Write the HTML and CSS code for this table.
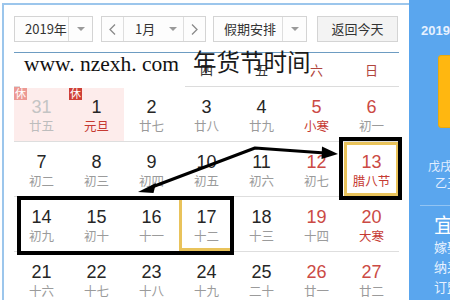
FILE: index.html
```html
<!DOCTYPE html>
<html lang="zh">
<head>
<meta charset="utf-8">
<title>万年历</title>
<link rel="stylesheet" href="styles.css">
</head>
<body>
<div class="page">
  <div class="cal">
    <div class="toolbar">
      <div class="sel sel-year">
        <span class="sel-text">2019年</span>
        <span class="sel-arrow"><i class="tri"></i></span>
      </div>
      <div class="sel sel-month">
        <span class="nav"><svg width="7" height="11" viewBox="0 0 7 11"><polyline points="6,0.5 1,5.5 6,10.5" fill="none" stroke="#8a8a8a" stroke-width="1.3"/></svg></span>
        <span class="sel-mid"><span class="mid-text">1月</span><i class="tri"></i></span>
        <span class="nav nav-r"><svg width="7" height="11" viewBox="0 0 7 11"><polyline points="1,0.5 6,5.5 1,10.5" fill="none" stroke="#8a8a8a" stroke-width="1.3"/></svg></span>
      </div>
      <div class="sel sel-hol">
        <span class="sel-text">假期安排</span>
        <span class="sel-arrow"><i class="tri"></i></span>
      </div>
      <div class="btn-today">返回今天</div>
    </div>

    <div class="week">
      <span>一</span><span>二</span><span>三</span><span>四</span><span>五</span><span class="we">六</span><span class="we">日</span>
    </div>

    <div class="grid">
      <div class="cell rest-day other"><i class="badge faded">休</i><div class="num">31</div><div class="lun">廿五</div></div>
      <div class="cell rest-day"><i class="badge">休</i><div class="num">1</div><div class="lun red">元旦</div></div>
      <div class="cell"><div class="num">2</div><div class="lun">廿七</div></div>
      <div class="cell"><div class="num">3</div><div class="lun">廿八</div></div>
      <div class="cell"><div class="num">4</div><div class="lun">廿九</div></div>
      <div class="cell wkend"><div class="num">5</div><div class="lun red">小寒</div></div>
      <div class="cell wkend"><div class="num">6</div><div class="lun">初一</div></div>

      <div class="cell"><div class="num">7</div><div class="lun">初二</div></div>
      <div class="cell"><div class="num">8</div><div class="lun">初三</div></div>
      <div class="cell"><div class="num">9</div><div class="lun">初四</div></div>
      <div class="cell"><div class="num">10</div><div class="lun">初五</div></div>
      <div class="cell"><div class="num">11</div><div class="lun">初六</div></div>
      <div class="cell wkend"><div class="num">12</div><div class="lun">初七</div></div>
      <div class="cell wkend mark"><div class="num">13</div><div class="lun red">腊八节</div></div>

      <div class="cell"><div class="num">14</div><div class="lun">初九</div></div>
      <div class="cell"><div class="num">15</div><div class="lun">初十</div></div>
      <div class="cell"><div class="num">16</div><div class="lun">十一</div></div>
      <div class="cell mark"><div class="num">17</div><div class="lun">十二</div></div>
      <div class="cell"><div class="num">18</div><div class="lun">十三</div></div>
      <div class="cell wkend"><div class="num">19</div><div class="lun">十四</div></div>
      <div class="cell wkend"><div class="num">20</div><div class="lun red">大寒</div></div>

      <div class="cell"><div class="num">21</div><div class="lun">十六</div></div>
      <div class="cell"><div class="num">22</div><div class="lun">十七</div></div>
      <div class="cell"><div class="num">23</div><div class="lun">十八</div></div>
      <div class="cell"><div class="num">24</div><div class="lun">十九</div></div>
      <div class="cell"><div class="num">25</div><div class="lun">二十</div></div>
      <div class="cell wkend"><div class="num">26</div><div class="lun">廿一</div></div>
      <div class="cell wkend"><div class="num">27</div><div class="lun">廿二</div></div>
    </div>
  </div>

  <div class="side">
    <div class="side-date">2019-01-17 星期四</div>
    <div class="side-big"></div>
    <div class="side-gz g1">戊戌年【狗年】</div>
    <div class="side-gz g2">乙丑月 丙戌日</div>
    <div class="side-line"></div>
    <div class="side-yi">宜</div>
    <div class="side-item">嫁娶 祭祀</div>
    <div class="side-item">纳采 出行</div>
    <div class="side-item">订盟 开市</div>
  </div>

  <div class="wm"><span class="wm-en">www. nzexh. com</span><span class="wm-cn">年货节时间</span></div>

  <svg class="annot" width="450" height="300" viewBox="0 0 450 300">
    <rect x="341" y="139" width="59" height="59" fill="none" stroke="#000" stroke-width="4"/>
    <rect x="19" y="198" width="213" height="55" fill="none" stroke="#000" stroke-width="4"/>
    <polyline points="152,187 255,148 325,153" fill="none" stroke="#000" stroke-width="3" stroke-linejoin="round"/>
    <polygon points="338,154 322,146.5 321.5,159" fill="#000"/>
    <polygon points="138,192 156,183 153.5,193" fill="#000"/>
  </svg>
</div>
</body>
</html>
```

FILE: styles.css
```css
* { box-sizing: border-box; }

html, body {
  margin: 0;
  padding: 0;
  background: #fff;
}

body {
  width: 450px;
  height: 300px;
  overflow: hidden;
  font-family: "Noto Sans CJK SC", "Liberation Sans", sans-serif;
}

.page {
  position: relative;
  display: flex;
  width: 450px;
  height: 300px;
  overflow: hidden;
}

/* ---------- calendar ---------- */
.cal {
  width: 407px;
  flex: none;
  margin: 3px 0 0 2px;
  border-top: 2px solid #9cc6ec;
  border-left: 2px solid #9cc6ec;
  padding: 11px 0 0 10px;
  background: #fff;
}

.toolbar {
  display: flex;
  height: 26px;
}

.sel, .btn-today {
  display: flex;
  align-items: stretch;
  height: 26px;
  border: 1px solid #d4d4d4;
  background: #fdfdfd;
  font-size: 13px;
  color: #333;
  line-height: 24px;
}

.sel-year { width: 79px; }
.sel-month { width: 105px; margin-left: 8px; }
.sel-hol { width: 94px; margin-left: 7px; }
.btn-today {
  width: 81px;
  margin-left: 10px;
  justify-content: center;
  background: #f3f3f3;
}

.sel-text {
  flex: 1;
  padding-left: 10px;
}

.sel-arrow {
  width: 24px;
  border-left: 1px solid #dedede;
  display: flex;
  align-items: center;
  justify-content: center;
}

.tri {
  display: block;
  width: 0;
  height: 0;
  border-left: 4px solid transparent;
  border-right: 4px solid transparent;
  border-top: 4px solid #9a9a9a;
}

.nav {
  width: 22px;
  display: flex;
  align-items: center;
  justify-content: center;
  border-right: 1px solid #dedede;
}

.nav-r {
  border-right: 0;
  border-left: 1px solid #dedede;
}

.sel-mid {
  flex: 1;
  display: flex;
  align-items: center;
  padding-left: 11px;
}

.mid-text { width: 32px; }

.sel-mid .tri { margin-left: 2px; }

/* week header */
.week {
  display: grid;
  grid-template-columns: repeat(7, 55px);
  width: 385px;
  margin-top: 10px;
  border-top: 1px solid #6d9cc2;
  border-bottom: 1px solid #dcdcdc;
  height: 35px;
  font-size: 13px;
  line-height: 33px;
  text-align: center;
  color: #333;
}

.week .we { color: #b0443c; }

/* day grid */
.grid {
  display: grid;
  grid-template-columns: repeat(7, 55px);
  grid-auto-rows: 55px;
  width: 385px;
}

.cell {
  position: relative;
  border-bottom: 1px solid #dedede;
  padding-top: 10px;
  text-align: center;
}

.num {
  font-family: "Liberation Sans", Arial, sans-serif;
  font-size: 18px;
  line-height: 20px;
  color: #262626;
}

.lun {
  font-size: 12.5px;
  line-height: 18px;
  color: #9b9b9b;
}

.lun.red { color: #c63a32; }

.wkend .num { color: #cb4a44; }

.rest-day { background: #fdeceb; }

.other .num { color: #c4c4c4; }
.other .lun { color: #bdbdbd; }

.badge {
  position: absolute;
  left: 0;
  top: 0;
  width: 13px;
  height: 13px;
  background: #cf3f36;
  color: #fff;
  font-style: normal;
  font-size: 11px;
  line-height: 13px;
  text-align: center;
}

.badge.faded { background: #ec9994; }

.mark {
  box-shadow: inset 0 0 0 3px #e9c35b;
}

/* ---------- side panel ---------- */
.side {
  flex: 1;
  background: #5aa6ee;
  overflow: hidden;
  white-space: nowrap;
  color: #fff;
}

.side-date {
  margin: 24px 0 0 12px;
  font-family: "Liberation Sans", Arial, sans-serif;
  font-size: 13px;
  font-weight: bold;
  line-height: 14px;
  color: #e6f1ff;
}

.side-big {
  margin: 17px 0 0 29px;
  width: 60px;
  height: 73px;
  background: #ffb710;
  border: 1px solid #eaa90a;
  border-radius: 3px;
}

.side-gz {
  font-size: 12px;
  line-height: 17px;
  color: #e2eeff;
}

.g1 { margin-top: 29px; padding-left: 19px; }
.g2 { padding-left: 26px; }

.side-line {
  margin: 14px 0 0 11px;
  height: 1px;
  background: #92c4f3;
}

.side-yi {
  margin-top: 7px;
  padding-left: 25px;
  font-size: 20px;
  line-height: 24px;
  color: #fff;
}

.side-item {
  padding-left: 25px;
  font-size: 13px;
  line-height: 20px;
  color: #e8f2ff;
}

/* ---------- overlays ---------- */
.wm {
  position: absolute;
  left: 20px;
  top: 54px;
  display: flex;
  align-items: baseline;
  white-space: nowrap;
}

.wm-en {
  display: inline-block;
  background: #fff;
  padding: 0 6px 17px 4px;
  font-family: "Liberation Serif", "Times New Roman", serif;
  font-size: 21.5px;
  line-height: 14px;
  color: #111;
}

.wm-cn {
  margin-left: 8px;
  font-family: "Noto Sans CJK SC", sans-serif;
  font-size: 23.5px;
  line-height: 14px;
  color: #1a1a1a;
}

.annot {
  position: absolute;
  left: 0;
  top: 0;
  pointer-events: none;
}
```
